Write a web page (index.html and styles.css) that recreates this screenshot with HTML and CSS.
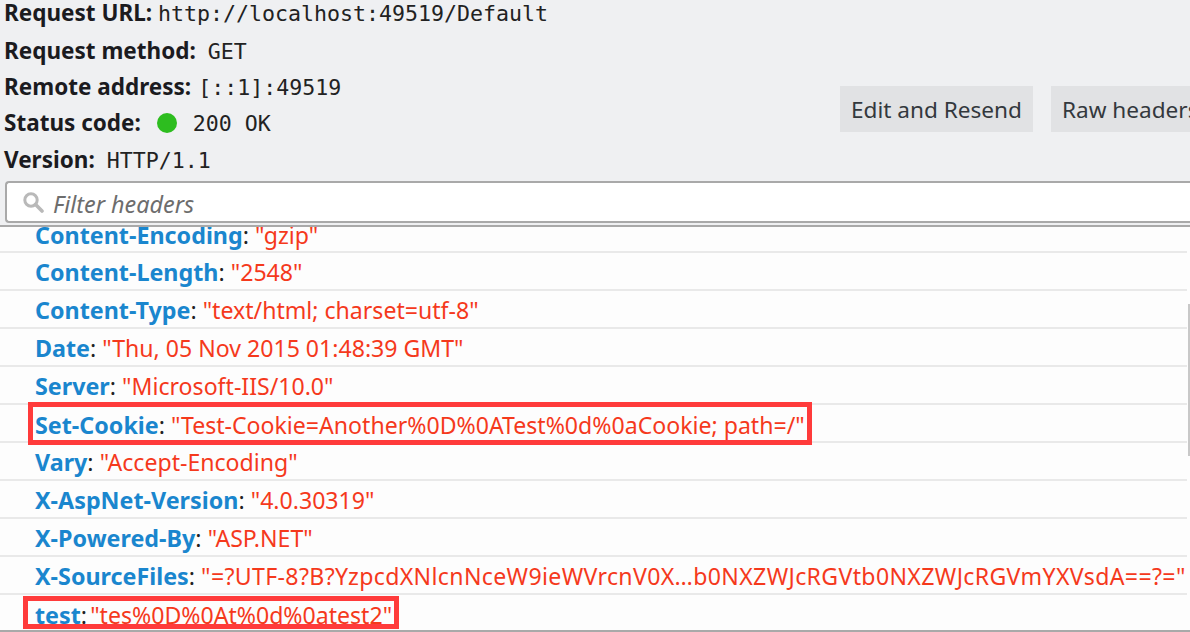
FILE: index.html
```html
<!DOCTYPE html>
<html lang="en">
<head>
<meta charset="utf-8">
<title>Headers</title>
<link rel="stylesheet" href="styles.css">
</head>
<body>
<header class="summary">
  <div class="facts">
    <div class="fact fact-url"><b>Request URL:</b><code>http://localhost:49519/Default</code></div>
    <div class="fact fact-method"><b>Request method:</b><code>GET</code></div>
    <div class="fact fact-remote"><b>Remote address:</b><code>[::1]:49519</code></div>
    <div class="fact fact-status"><b>Status code:</b><span class="dot"></span><code>200 OK</code></div>
    <div class="fact fact-version"><b>Version:</b><code>HTTP/1.1</code></div>
  </div>
  <div class="actions">
    <button class="btn">Edit and Resend</button>
    <button class="btn">Raw headers</button>
  </div>
</header>
<div class="filterbar">
  <div class="filter">
    <svg class="search" viewBox="0 0 22 22" width="22" height="22"><circle cx="9" cy="9" r="6.2" fill="none" stroke="#b9b9b9" stroke-width="3"/><path d="M13.6 13.6L20 20" stroke="#b9b9b9" stroke-width="3.6" stroke-linecap="round"/></svg>
    <span class="placeholder">Filter headers</span>
  </div>
</div>
<main class="list">
  <div class="row row-first"><b>Content-Encoding</b><i>:</i> <span>"gzip"</span></div>
  <div class="row"><b>Content-Length</b><i>:</i> <span>"2548"</span></div>
  <div class="row"><b>Content-Type</b><i>:</i> <span>"text/html; charset=utf-8"</span></div>
  <div class="row"><b>Date</b><i>:</i> <span>"Thu, 05 Nov 2015 01:48:39 GMT"</span></div>
  <div class="row"><b>Server</b><i>:</i> <span>"Microsoft-IIS/10.0"</span></div>
  <div class="row"><div class="mark mark-a"><b>Set-Cookie</b><i>:</i> <span>"Test-Cookie=Another%0D%0ATest%0d%0aCookie; path=/"</span></div></div>
  <div class="row"><b>Vary</b><i>:</i> <span>"Accept-Encoding"</span></div>
  <div class="row"><b>X-AspNet-Version</b><i>:</i> <span>"4.0.30319"</span></div>
  <div class="row"><b>X-Powered-By</b><i>:</i> <span>"ASP.NET"</span></div>
  <div class="row row-narrow"><b>X-SourceFiles</b><i>:</i> <span>"=?UTF-8?B?YzpcdXNlcnNceW9ieWVrcnV0X…b0NXZWJcRGVtb0NXZWJcRGVmYXVsdA==?="</span></div>
  <div class="row row-last"><div class="mark mark-b"><b>test</b><i>:</i> <span>"tes%0D%0At%0d%0atest2"</span></div></div>
  <div class="thumb"></div>
</main>
</body>
</html>
```
FILE: styles.css
```css
html, body { margin: 0; height: 100%; }
body {
  width: 1190px; height: 632px; overflow: hidden; background: #fdfdfd;
  font-family: "Noto Sans", "Open Sans", sans-serif; color: #222;
}
.summary {
  display: flex; height: 181px; background: #eff0f2; overflow: hidden;
}
.facts { width: 840px; flex: none; padding-left: 4px; box-sizing: border-box; }
.fact { display: flex; align-items: baseline; white-space: nowrap; line-height: 26px; height: 26px; }
.fact b { font-size: 22.5px; font-weight: 700; color: #1b1b1f; }
.fact code { font-family: "DejaVu Sans Mono", monospace; font-size: 21.6px; color: #222; }
.fact-url { margin-bottom: 12px; }
.fact-url code { margin-left: 6px; }
.fact-method { margin-bottom: 10px; }
.fact-method code { margin-left: 12px; }
.fact-remote { margin-bottom: 10px; }
.fact-remote code { margin-left: 7px; }
.fact-status { margin-bottom: 11px; }
.fact-status code { margin-left: 16px; }
.fact-version code { margin-left: 12px; }
.dot { width: 20px; height: 20px; border-radius: 50%; background: #2dbd1f; margin-left: 16px; align-self: center; }
.actions { display: flex; gap: 18px; padding-top: 86px; flex: none; }
.btn {
  height: 46px; padding: 0 11px; border: 0; background: #e1e2e4;
  font: 400 22.6px "Noto Sans", sans-serif; color: #33383d; white-space: nowrap;
}
.filterbar { background: #eff0f2; padding: 0 0 2px 5px; }
.filter {
  display: flex; align-items: center; height: 42px; box-sizing: border-box;
  padding-left: 15px; background: #fff; gap: 9px;
  border: 2px solid #a9a9a9; border-right: 0;
  border-radius: 4px 0 0 4px;
}
.placeholder { font-style: italic; font-size: 23.4px; color: #6d6d6d; padding-top: 3px; }
.list {
  position: relative; height: 403px; overflow: hidden;
  border-top: 2px solid #a9a9a9; border-bottom: 2px solid #a9a9a9;
}
.row {
  height: 38px; box-sizing: border-box; padding-left: 35px; white-space: nowrap;
  border-bottom: 2px solid #e9e9e9; font-size: 23.3px; line-height: 38px; margin-right: 3px;
}
.row-first { height: 26px; line-height: 16px; }
.row-narrow span { letter-spacing: .35px; }
.row-last { border-bottom: 0; }
.row b { color: #1a86ce; font-weight: 700; }
.row i { font-style: normal; color: #222; }
.row span { color: #f5391c; font-size: 23.1px; }
.mark { display: inline-block; vertical-align: top; border: 5px solid #ff3b3b; }
.mark-a { margin: -3px 0 0 -7px; padding: 0 2px 0 2px; position: relative; height: 33px; line-height: 36px; }
.mark-b { margin: 1px 0 0 -12px; padding: 0 2px 0 7px; line-height: 29px; height: 23px; }
.mark-b span { margin-left: -3px; }
.thumb { position: absolute; right: 0; top: 77px; width: 2px; height: 152px; background: #c8c8c8; }
```
